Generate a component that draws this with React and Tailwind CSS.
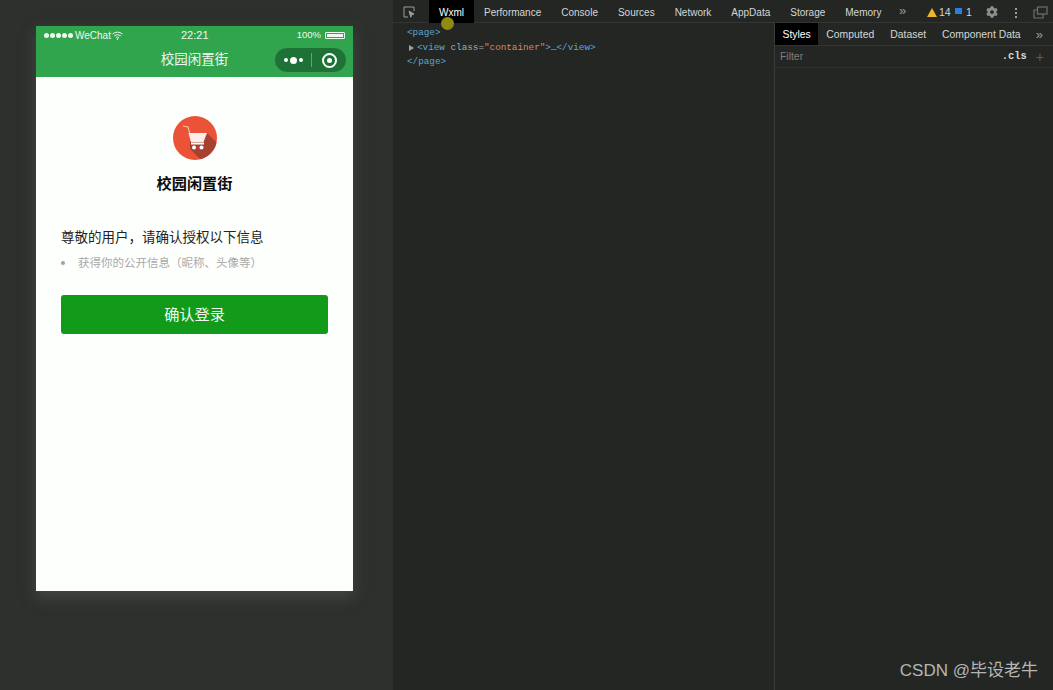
import React from 'react'
import { FaCog } from 'react-icons/fa'

const cjk = "font-['Liberation_Sans','Noto_Sans_CJK_SC',sans-serif]"

const tabs = ['Wxml', 'Performance', 'Console', 'Sources', 'Network', 'AppData', 'Storage', 'Memory']
const subTabs = ['Styles', 'Computed', 'Dataset', 'Component Data']

const CartLogo = () => (
  <svg width="44" height="44" viewBox="0 0 44 44">
    <defs>
      <clipPath id="logoClip">
        <circle cx="22" cy="22" r="22" />
      </clipPath>
    </defs>
    <circle cx="22" cy="22" r="22" fill="#ea5338" />
    <path d="M34 17 L52 35 L52 52 L36 52 L17 33 L17 26 Z" fill="#a8412f" clipPath="url(#logoClip)" />
    <path d="M10 10 L15 11 L19 26" fill="none" stroke="#f6c49a" strokeWidth="1.1" />
    <path d="M15.5 17 L34 17 L30.5 26 L18 26 Z" fill="#fbeeea" />
    <rect x="18" y="26.5" width="13" height="2" fill="#fff" />
    <circle cx="21" cy="31.5" r="2" fill="#fff" />
    <circle cx="28.5" cy="31.5" r="2" fill="#fff" />
  </svg>
)

const Wifi = () => (
  <svg width="11" height="9" viewBox="0 0 11 9" fill="none" stroke="#e8f5e8" strokeWidth="1">
    <path d="M0.5 3 Q5.5 -0.8 10.5 3" />
    <path d="M2.2 4.8 Q5.5 2.2 8.8 4.8" />
    <path d="M3.9 6.5 Q5.5 5.3 7.1 6.5" />
    <circle cx="5.5" cy="8" r="0.5" fill="#e8f5e8" />
  </svg>
)

const Phone = () => (
  <div className="w-[317px] h-[565px] bg-[#fdfffd] flex flex-col shadow-[0_6px_14px_rgba(90,92,90,0.55)]">
    <div className="h-[51px] bg-[#30a54d] flex flex-col text-[#eef8ee] shrink-0">
      <div className="h-[18px] flex items-center justify-between pl-2 pr-2 text-[10px] relative">
        <div className="flex items-center gap-[1px]">
          <span className="flex gap-[1px]">
            {[0, 1, 2, 3, 4].map((i) => (
              <span key={i} className="w-[5px] h-[5px] rounded-full bg-[#eef8ee]" />
            ))}
          </span>
          <span className="ml-[1px]">WeChat</span>
          <Wifi />
        </div>
        <span className="absolute left-[145px] text-[11px]">22:21</span>
        <div className="flex items-center gap-[4px]">
          <span className="text-[9.5px]">100%</span>
          <span className="w-[20px] h-[7px] border border-[#eef8ee] rounded-[1px] p-[1px] flex">
            <span className="flex-1 bg-[#eef8ee]" />
          </span>
        </div>
      </div>
      <div className="flex-1 flex items-center justify-center relative">
        <span className="text-[13.5px] -mt-[1px]">校园闲置街</span>
        <div className="absolute right-[6px] top-[3px] w-[73px] h-[26px] rounded-full bg-[#1e7236] border border-[#3e9c57] flex items-center">
          <div className="w-[36px] flex items-center justify-center gap-[2px]">
            <span className="w-[4px] h-[4px] rounded-full bg-white" />
            <span className="w-[7px] h-[7px] rounded-full bg-white" />
            <span className="w-[4px] h-[4px] rounded-full bg-white" />
          </div>
          <span className="w-px h-[14px] bg-[#5aa872]" />
          <div className="flex-1 flex items-center justify-center">
            <span className="w-[15px] h-[15px] rounded-full border-2 border-white flex items-center justify-center">
              <span className="w-[5px] h-[5px] rounded-full bg-white" />
            </span>
          </div>
        </div>
      </div>
    </div>
    <div className="flex-1 flex flex-col px-[25px]">
      <div className="flex flex-col items-center pt-[39px]">
        <CartLogo />
        <div className="mt-[13px] text-[15.2px] leading-[22px] font-bold text-[#0c0c0c]">校园闲置街</div>
      </div>
      <div className="mt-[33px] text-[13.5px] leading-[20px] text-[#222]">尊敬的用户，请确认授权以下信息</div>
      <div className="mt-[5px] flex items-center text-[11.5px] leading-[20px] text-[#a9a9a9]">
        <span className="w-[4px] h-[4px] rounded-full bg-[#a0a5a0] mr-[13px]" />
        获得你的公开信息（昵称、头像等）
      </div>
      <button className="mt-[22px] h-[39px] w-[267px] pt-[2px] rounded-[3px] bg-[#129a1a] text-[#f2fbf2] text-[15.2px]">确认登录</button>
    </div>
  </div>
)

const DevTools = () => (
  <div className="flex-1 bg-[#242624] flex flex-col relative">
    <div className="h-[23px] flex items-center border-b border-[#333533] text-[10px] text-[#d4d6d4] font-['Liberation_Sans',sans-serif] relative">
      <svg className="ml-[10px] mr-[14px] mt-[2px]" width="12" height="12" viewBox="0 0 12 12" fill="none" stroke="#9a9c9a" strokeWidth="1">
        <path d="M5 11 H1 V1 H11 V5" />
        <path d="M6 5 L11 8 L8.6 8.8 L7.8 11.2 Z" fill="#9a9c9a" />
      </svg>
      {tabs.map((t, i) => (
        <div key={t} className={i === 0 ? 'h-[23px] px-[10px] pt-[2px] flex items-center bg-black text-white' : 'h-[23px] px-[10px] pt-[2px] flex items-center'}>
          {t}
        </div>
      ))}
      <span className="absolute left-[506px] top-[3px] text-[13px] leading-[16px] text-[#9a9c9a]">»</span>
      <svg className="absolute left-[534px] top-[8px]" width="10" height="9" viewBox="0 0 10 9"><path d="M5 0 L10 9 H0 Z" fill="#f0b429" /></svg>
      <span className="absolute left-[546px] top-[6px] text-[10.5px] leading-[13px]">14</span>
      <span className="absolute left-[562px] top-[8px] w-[7px] h-[6px] bg-[#2b7de0]" />
      <span className="absolute left-[573px] top-[6px] text-[10.5px] leading-[13px]">1</span>
      <FaCog className="absolute left-[593px] top-[6px] text-[#8c8e8c]" size={12} />
      <span className="absolute left-[622px] top-[8px] flex flex-col gap-[2px]">
        <span className="w-[2px] h-[2px] bg-[#9a9c9a]" />
        <span className="w-[2px] h-[2px] bg-[#9a9c9a]" />
        <span className="w-[2px] h-[2px] bg-[#9a9c9a]" />
      </span>
      <svg className="absolute left-[640px] top-[6px]" width="15" height="13" viewBox="0 0 15 13" fill="none" stroke="#6e706e" strokeWidth="1.2">
        <rect x="4.5" y="1" width="9.5" height="7" />
        <path d="M4.5 4 H1 V12 H10 V8" />
      </svg>
    </div>
    <div className="flex-1 flex">
      <div className="w-[382px] border-r border-[#3a3c3a] pt-[3px] pl-[14px] font-['Liberation_Mono',monospace] text-[9.3px] leading-[14.5px] text-[#5aa5d5]">
        <div>&lt;page&gt;</div>
        <div className="flex items-center ml-[2px]">
          <span className="w-0 h-0 border-y-[3px] border-y-transparent border-l-[5px] border-l-[#a0a2a0] mr-[3px]" />
          <span>&lt;view <span className="text-[#a8aaa8]">class=</span><span className="text-[#d88a5a]">"container"</span>&gt;<span className="text-[#c8cac8]">…</span>&lt;/view&gt;</span>
        </div>
        <div>&lt;/page&gt;</div>
      </div>
      <div className="flex-1 flex flex-col text-[10.4px] text-[#d4d6d4] font-['Liberation_Sans',sans-serif]">
        <div className="h-[23px] flex items-center border-b border-[#333533]">
          {subTabs.map((t, i) => (
            <div key={t} className={i === 0 ? 'h-[22px] px-[7.5px] pt-[2px] flex items-center bg-black text-white' : 'h-[22px] px-2 pt-[2px] flex items-center'}>
              {t}
            </div>
          ))}
          <span className="ml-[7px] text-[13px] leading-none text-[#9a9c9a]">»</span>
        </div>
        <div className="h-[22px] flex items-center border-b border-[#2e302e] pl-[5px] pt-[1px] text-[#7c7e7c]">
          Filter
          <span className="ml-auto mr-[9px] font-['Liberation_Mono',monospace] font-bold text-[#d8dad8]">.cls</span>
          <span className="mr-[9px] text-[14px] leading-none text-[#5c5e5c]">+</span>
        </div>
      </div>
    </div>
    <div className={`absolute right-[15px] bottom-[7px] text-[17px] leading-[24px] text-[#b4b6b4] ${cjk}`}>CSDN @毕设老牛</div>
  </div>
)

export default function App() {
  return (
    <div className={`w-[1053px] h-[690px] flex overflow-hidden bg-[#2e302d] ${cjk}`}>
      <div className="w-[393px] shrink-0 pt-[26px] pl-[36px]">
        <Phone />
      </div>
      <DevTools />
      {/* cursor highlight */}
      <span className="absolute left-[441px] top-[17px] w-[13px] h-[13px] rounded-full bg-[#8f8a12]" />
    </div>
  )
}
